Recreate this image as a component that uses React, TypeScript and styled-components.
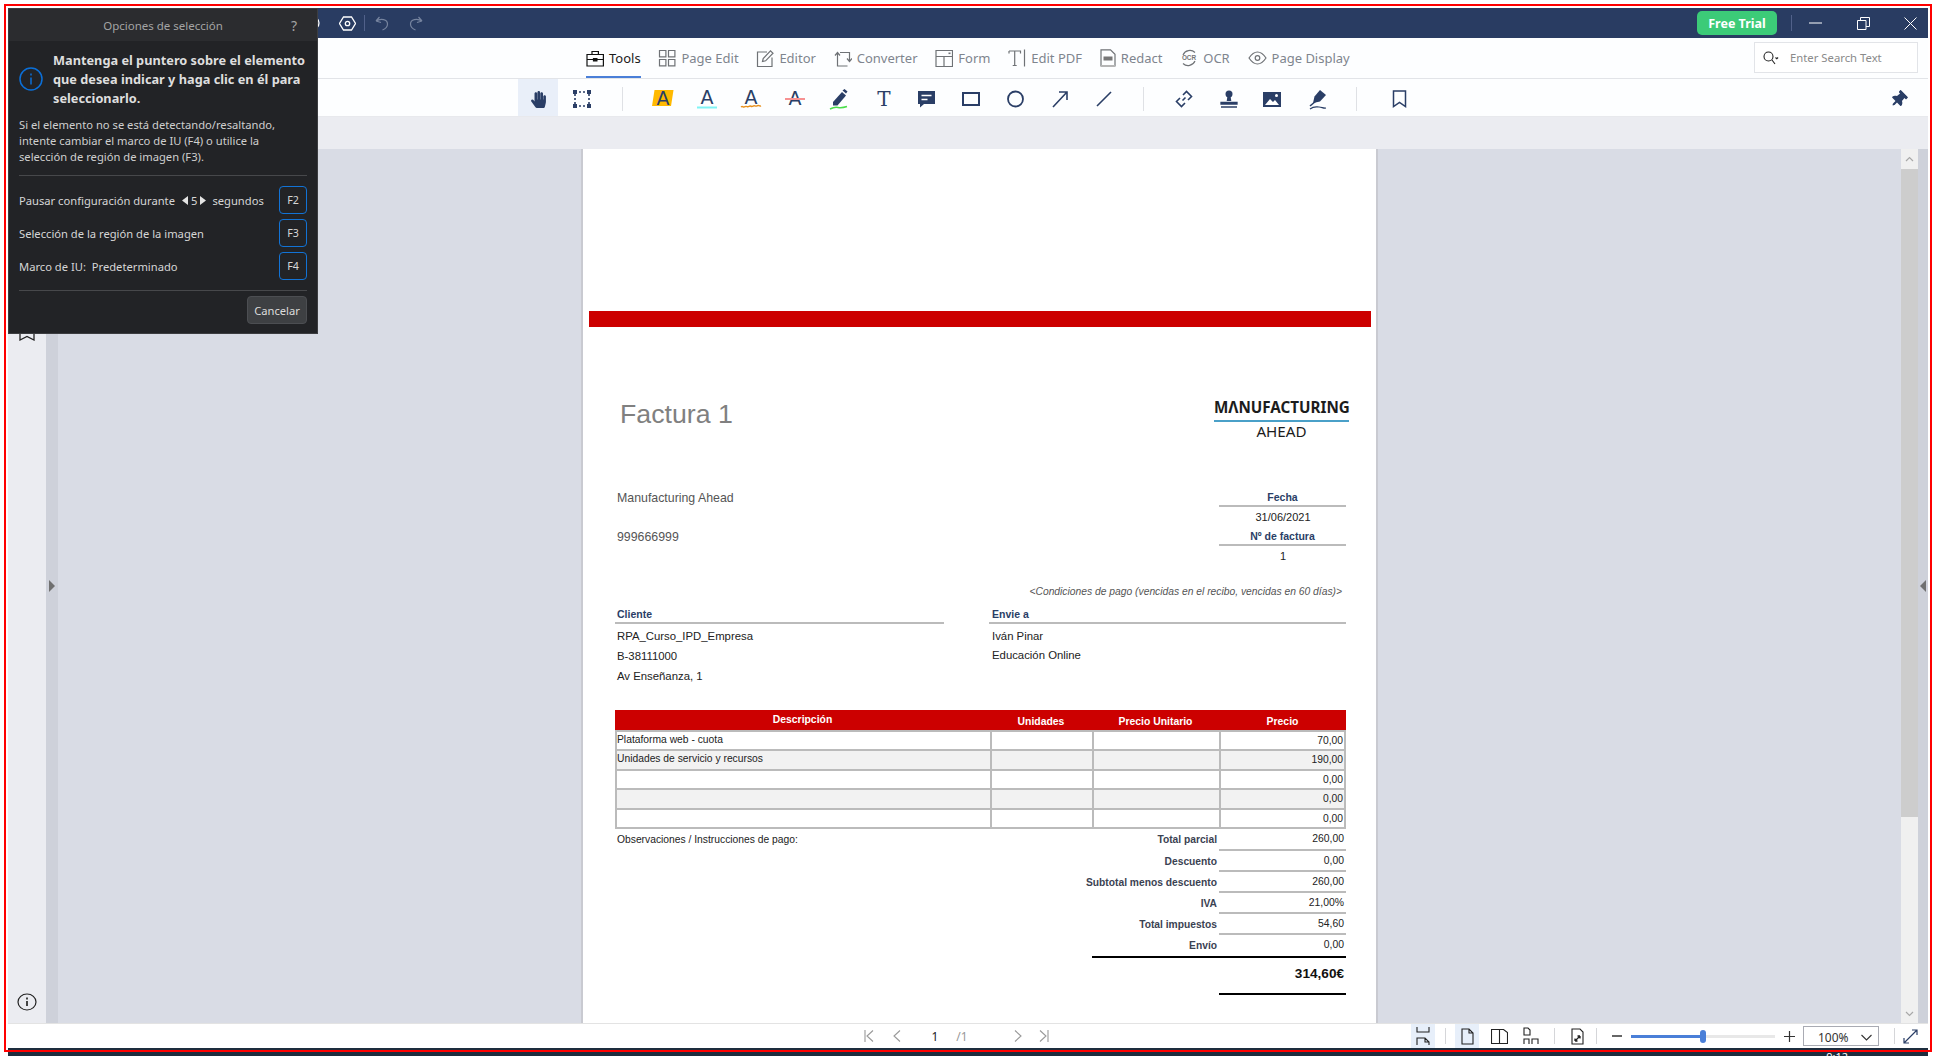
import React from "react";
import styled, { createGlobalStyle } from "styled-components";
import { FaHandPaper, FaThumbtack } from "react-icons/fa";

const Global = createGlobalStyle`
  html, body { margin: 0; padding: 0; background: #fff; overflow: hidden; }
  * { box-sizing: border-box; }
`;

const UI = `"Noto Sans", "Open Sans", sans-serif`;
const DOC = `"Liberation Sans", Arial, sans-serif`;
const NAVY = "#2a3e66";

const Screen = styled.div`
  position: relative; width: 1936px; height: 1056px; overflow: hidden; background: #fff;
  padding: 8px 8px 0; display: flex; flex-direction: column; font-family: ${UI};
`;
const RedFrame = styled.div`
  position: absolute; left: 4px; top: 4px; width: 1928px; height: 1048px;
  border: 2px solid #f00; pointer-events: none; z-index: 5;
`;
const Win = styled.div`width: 1920px; height: 1040px; flex: none; display: flex; flex-direction: column; background: #fff;`;
const Strip = styled.div`
  flex: none; height: 8px; width: 1920px; background: #1d2d3e; color: #fff; font-size: 11px; line-height: 12px;
  padding: 3px 80px 0 0; text-align: right; overflow: hidden;
`;

/* title bar */
const TitleBar = styled.div`flex: none; height: 30px; background: #293c62; display: flex; align-items: center; padding: 0 9px 0 288px;`;
const TitleSlot = styled.div`width: 34px; height: 30px; display: flex; align-items: center; justify-content: center;`;
const TitleDivider = styled.div<{ $ml?: number }>`width: 1px; height: 16px; background: #51618a; margin-left: ${p => p.$ml ?? 0}px;`;
const FreeTrial = styled.button`
  margin-left: auto; width: 80px; height: 24px; border: 0; border-radius: 5px; background: #3ccb78; color: #fff;
  font: 700 12.5px ${UI}; padding: 0;
`;
const WinBtn = styled.div<{ $ml: number }>`
  width: 18px; height: 18px; margin-left: ${p => p.$ml}px; display: flex; align-items: center; justify-content: center;
`;

/* tabs */
const TabBar = styled.div`
  flex: none; height: 41px; background: #fdfeff; border-bottom: 1px solid #e2e4e8; display: flex; padding: 0 10px 0 578px; gap: 17.8px;
`;
const Tab = styled.div<{ $active?: boolean }>`
  height: 40px; display: flex; align-items: center; gap: 5px; font-size: 13px; white-space: nowrap; padding-top: 1px;
  color: ${p => (p.$active ? "#1b1b1b" : "#7f858e")};
  border-bottom: 2px solid ${p => (p.$active ? "#4a7fd8" : "transparent")};
`;
const SearchBox = styled.div`
  margin: 4px 0 0 auto; width: 164px; height: 31px; border: 1px solid #e2e4e8; background: #fff;
  display: flex; align-items: center; padding-left: 8px; gap: 11px; font-size: 11.3px; color: #8a8a8a;
`;

/* toolbar */
const ToolBar = styled.div`
  flex: none; height: 38px; background: #fdfeff; border-bottom: 1px solid #e8e9ed; display: flex; align-items: center; padding: 0 8px 0 508px;
`;
const Tool = styled.div<{ $active?: boolean }>`
  width: 40px; height: 37px; margin: 0 2px; padding-top: 3px; flex: none; display: flex; align-items: center; justify-content: center;
  background: ${p => (p.$active ? "#e9eff9" : "transparent")}; color: ${NAVY};
`;
const ToolDivider = styled.div<{ $mx: number; $mr: number }>`
  width: 1px; height: 24px; flex: none; background: #dfe1e5; margin: 3px ${p => p.$mr}px 0 ${p => p.$mx}px;
`;
const PinTool = styled(Tool)`margin-left: auto;`;
const Pin = styled(FaThumbtack)`transform: rotate(45deg); display: block;`;
const Band = styled.div`flex: none; height: 32px; background: #ebecf1;`;

/* main */
const Main = styled.div`flex: none; height: 874px; display: flex; overflow: hidden;`;
const Sidebar = styled.div`
  width: 38px; flex: none; background: #ebecf1; display: flex; flex-direction: column; align-items: center; padding: 174px 0 10px;
`;
const SideInfo = styled.div`margin-top: auto; height: 20px;`;
const Splitter = styled.div<{ $w: number }>`
  width: ${p => p.$w}px; flex: none; background: #ced1da; display: flex; align-items: center; justify-content: center;
`;
const Arrow = styled.div<{ $dir: "l" | "r" }>`
  width: 0; height: 0;
  border-top: 6px solid transparent; border-bottom: 6px solid transparent;
  ${p => (p.$dir === "r" ? "border-left: 6px solid #707070;" : "border-right: 6px solid #707070;")}
`;
const Canvas = styled.div`flex: 1; background: #d9dce5; display: flex; justify-content: center; overflow: hidden;`;
const Scrollbar = styled.div`width: 17px; flex: none; background: #f0f0f0; display: flex; flex-direction: column; align-items: center;`;
const ScrollBtn = styled.div<{ $h: number }>`height: ${p => p.$h}px; flex: none; display: flex; align-items: center; justify-content: center;`;
const Thumb = styled.div`width: 17px; height: 648px; flex: none; background: #cdcdcd;`;
const ScrollRest = styled.div`flex: 1;`;

/* invoice */
const Sheet = styled.div`
  width: 793px; height: 874px; flex: none; background: #fff; box-shadow: 0 0 0 2px #c9cad1; font-family: ${DOC};
  display: flex; flex-direction: column;
`;
const RedBand = styled.div`height: 16px; margin: 162px 5px 0 6px; background: #cc0000; flex: none;`;
const SheetBody = styled.div`padding: 0 30px 0 32px; display: flex; flex-direction: column;`;
const TitleRow = styled.div`height: 161px; padding-top: 69px; display: flex; justify-content: space-between; align-items: flex-start;`;
const InvoiceTitle = styled.div`font-size: 26.7px; line-height: 36px; color: #808080; padding-left: 5px;`;
const Logo = styled.div`width: 135px; margin: 1px -3px 0 0; font-family: ${UI}; color: #1c1c1c; text-align: center;`;
const LogoTop = styled.div`font-size: 15.2px; font-weight: 700; line-height: 20px; white-space: nowrap; border-bottom: 2px solid #4aa0c8; padding-bottom: 3px; height: 25px;`;
const LogoBottom = styled.div`font-size: 15.2px; line-height: 18px;`;
const InfoRow = styled.div`display: flex; justify-content: space-between; height: 78px;`;
const Company = styled.div<{ $mt?: number }>`font-size: 12.35px; line-height: 20px; color: #555; padding-left: 2px; margin-top: ${p => p.$mt ?? 0}px;`;
const Meta = styled.div`width: 127px; text-align: center; padding-left: 1px;`;
const MetaLabel = styled.div`height: 19px; line-height: 18px; font-size: 10.5px; font-weight: 700; color: ${NAVY}; border-bottom: 2px solid #bbb; margin-left: -1px;`;
const MetaValue = styled.div`height: 20px; line-height: 20px; font-size: 11px; color: #222;`;
const Terms = styled.div`margin-top: 19px; height: 14px; line-height: 14px; font-size: 10.3px; font-style: italic; color: #555; text-align: right; padding-right: 4px;`;
const AddressRow = styled.div`margin-top: 7px; height: 81px; display: grid; grid-template-columns: 329px 357px; column-gap: 45px;`;
const AddressHead = styled.div<{ $pl?: number }>`height: 18px; line-height: 16px; font-size: 10.5px; font-weight: 700; color: ${NAVY}; border-bottom: 2px solid #bbb; padding-left: ${p => p.$pl ?? 2}px; margin-bottom: 3px;`;
const AddressLine = styled.div<{ $h?: number; $pl?: number }>`height: ${p => p.$h ?? 20}px; line-height: 19px; font-size: 11.35px; color: #222; padding-left: ${p => p.$pl ?? 2}px;`;
const TableHead = styled.div`
  margin-top: 23px; height: 19.5px; background: #cc0000; display: grid; grid-template-columns: 375px 102px 127px 127px;
  color: #fff; font-size: 10.4px; font-weight: 700; text-align: center;
`;
const HeadCell = styled.div<{ $up?: boolean }>`line-height: ${p => (p.$up ? 20 : 24)}px;`;
const Grid = styled.div`
  background: #bbb; display: grid; grid-template-columns: 373px 100px 125px 1fr; grid-auto-rows: 17.6px; gap: 2px; padding: 2px;
`;
const Cell = styled.div<{ $alt: boolean; $right?: boolean }>`
  background: ${p => (p.$alt ? "#f2f2f2" : "#fff")}; font-size: 10.3px; color: #222; padding: 0 1px 0 0;
  line-height: ${p => (p.$right ? 18 : 16)}px;
  text-align: ${p => (p.$right ? "right" : "left")};
`;
const Totals = styled.div`display: flex; justify-content: space-between;`;
const Notes = styled.div`font-size: 10.3px; line-height: 22px; color: #222; padding-left: 2px;`;
const TotalCol = styled.div`width: 400px; display: flex; flex-direction: column;`;
const TotalRow = styled.div`height: 21.1px; display: flex; justify-content: flex-end;`;
const TotalLabel = styled.div`font-size: 10.25px; line-height: 22px; font-weight: 700; color: #3b4252; margin-right: 2px; white-space: nowrap;`;
const TotalValue = styled.div<{ $plain?: boolean }>`
  width: 127px; font-size: 10.4px; line-height: 20px; color: #222; text-align: right; padding-right: 2px;
  border-bottom: ${p => (p.$plain ? "0" : "2px solid #bbb")};
`;
const BlackRule = styled.div`height: 2px; width: 254px; background: #000; align-self: flex-end;`;
const GrandTotal = styled.div`
  width: 127px; height: 37px; align-self: flex-end; text-align: right; padding-right: 2px; font-size: 13.6px; font-weight: 700; line-height: 32px; color: #111;
  border-bottom: 2px solid #000;
`;

/* status bar */
const StatusBar = styled.div`flex: none; height: 25px; border-top: 1px solid #e3e3e3; background: #fff; display: flex; align-items: center; padding: 0 8px 0 848px;`;
const PagerBtn = styled.div<{ $ml?: number }>`width: 26px; height: 24px; margin-left: ${p => p.$ml ?? 0}px; display: flex; align-items: center; justify-content: center;`;
const PageNum = styled.div<{ $ml: number; $dim?: boolean }>`
  width: 20px; margin-left: ${p => p.$ml}px; text-align: center; font-size: 12px; color: ${p => (p.$dim ? "#999" : "#222")};
`;
const StatusRight = styled.div`margin-left: auto; display: flex; align-items: center;`;
const StatusBtn = styled.div<{ $ml?: number; $active?: boolean; $w?: number }>`
  width: ${p => p.$w ?? 24}px; height: 24px; margin-left: ${p => p.$ml ?? 0}px; flex: none; display: flex; align-items: center; justify-content: center;
  background: ${p => (p.$active ? "#e7effa" : "transparent")};
`;
const StatusDivider = styled.div<{ $ml: number }>`width: 1px; height: 16px; background: #d5d6d9; margin-left: ${p => p.$ml}px; flex: none;`;
const Slider = styled.div`position: relative; width: 144px; height: 3px; margin-left: 6px; background: #e8e8e8;`;
const SliderFill = styled.div`width: 72px; height: 3px; background: #4a7fd8;`;
const SliderThumb = styled.div`position: absolute; left: 69px; top: -5px; width: 6px; height: 13px; border-radius: 3px; background: #4a7fd8;`;
const ZoomBox = styled.div`
  width: 76px; height: 20px; margin-left: 6px; border: 1px solid #a9abb3; display: flex; align-items: center; padding: 2px 6px 0 14px;
  justify-content: space-between; font-size: 12px; color: #333;
`;

/* modal */
const Modal = styled.div`
  position: absolute; left: 8px; top: 8px; width: 310px; height: 326px; background: #222326; border: 1px solid #3c3d40; z-index: 3;
  color: #d6d6d6; display: flex; flex-direction: column; font-family: ${UI};
`;
const ModalHead = styled.div`
  position: relative; flex: none; height: 32px; background: #2b2c2f; text-align: center; font-size: 11.5px; line-height: 34px; color: #a4a4a4;
`;
const Help = styled.span`position: absolute; right: 20px; top: 0; font-size: 14px; color: #a4a4a4;`;
const ModalBody = styled.div`padding: 10px 10px 0; display: flex; flex-direction: column; flex: 1;`;
const Lead = styled.div`display: flex; align-items: center; gap: 10px; height: 56px;`;
const LeadIcon = styled.svg`flex: none; display: block;`;
const LeadText = styled.div`font-size: 12.75px; font-weight: 700; line-height: 19px; color: #dedede; white-space: pre-line;`;
const Hint = styled.div`margin-top: 10px; font-size: 11.2px; line-height: 16px; color: #cfcfcf; white-space: pre-line;`;
const ModalRule = styled.div<{ $mt: number }>`height: 1px; background: #47484b; margin-top: ${p => p.$mt}px; flex: none;`;
const OptionRows = styled.div`margin-top: 10px; display: flex; flex-direction: column; gap: 5px;`;
const OptionRow = styled.div`height: 28px; display: flex; align-items: center; justify-content: space-between; font-size: 11.2px;`;
const OptionText = styled.span`display: flex; align-items: center; gap: 6px; white-space: pre;`;
const Stepper = styled.span`display: inline-flex; align-items: center; gap: 3px; margin-left: 1px;`;
const KeyBox = styled.div`
  width: 28px; height: 28px; border: 1px solid #1273d6; border-radius: 4px; display: flex; align-items: center; justify-content: center; font-size: 10.7px; color: #d6d6d6;
`;
const ModalFoot = styled.div`display: flex; justify-content: flex-end; margin-top: 5px;`;
const Cancel = styled.button`
  width: 60px; height: 28px; background: #3e4043; color: #dcdcdc; border: 1px solid #4c4e52; border-radius: 4px; font: 11.2px ${UI}; padding: 0;
`;

/* icons */
const S = { fill: "none", stroke: "currentColor", strokeWidth: 1.2 } as const;
const Grey = styled.svg<{ $c?: string }>`color: ${p => p.$c ?? "#6f7276"}; flex: none; display: block;`;

const Ic = ({ w = 18, h = 18, c, children }: { w?: number; h?: number; c?: string; children: React.ReactNode }) => (
  <Grey $c={c} width={w} height={h} viewBox={`0 0 ${w} ${h}`} {...S}>{children}</Grey>
);

const TabIcons: Record<string, React.ReactNode> = {
  Tools: <Ic c="#111"><path d="M1 5.500h16.400v11.500H1zM1 10.500h16.400M6 5.500V2.500h6.400v3" /><path d="M7.500 9.500h3.400v2.400H7.500z" fill="#111" /></Ic>,
  "Page Edit": <Ic><path d="M1.500 1.500h6.400v6.400H1.500zM10.500 1.500h6.400v6.400h-6.400zM1.500 10.500h6.400v6.400H1.500zM10.500 10.500h6.400v6.400h-6.400z" /></Ic>,
  Editor: <Ic><path d="M11 3H1.500v14.500h14.500V8.500" /><path d="M6.500 12.500l.7-3L14.500 1.800l2.500 2.400-7.400 7.600z" /></Ic>,
  Converter: <Ic><path d="M1 6.500l2.500-3 2.500 3M3.500 3.500V17h10" /><path d="M6 3.500h9.500V12M13 9.500l2.500 3 2.500-3" /></Ic>,
  Form: <Ic><path d="M1 1.500h16.500v16H1zM1 7.500h16.500M9 7.500v10" /><path d="M13.500 3.500h2v1.600h-2z" fill="currentColor" stroke="none" /></Ic>,
  "Edit PDF": <Ic><path d="M1 2v2.500M1 2h11.500v2.500M6.700 2v14.500M4.700 16.500h4" /><path d="M16.500 .5v17" /></Ic>,
  Redact: <Ic w={16}><path d="M1 .8h9.500l4.500 4.500V17H1z" /><path d="M1 17h14" strokeWidth={2} stroke="#b5b5b5" /><path d="M3.500 7.500h9v4h-9z" fill="#777" stroke="none" /></Ic>,
  OCR: <Ic><path d="M3 6a7.500 7.500 0 0 1 12-2.500M15 12a7.500 7.500 0 0 1-12 2.500" /><text x="9" y="11.300" fontSize="6.400" fontFamily='"Liberation Sans", sans-serif' stroke="none" fill="#777" textAnchor="middle" fontWeight="700">OCR</text></Ic>,
  "Page Display": <Ic w={19}><path d="M1 9c3-4.500 5.500-6 8.500-6s5.500 1.500 8.500 6c-3 4.500-5.500 6-8.500 6S4 13.500 1 9z" /><circle cx="9.500" cy="9" r="2.300" /></Ic>,
};

const tabs = ["Tools", "Page Edit", "Editor", "Converter", "Form", "Edit PDF", "Redact", "OCR", "Page Display"];

const TB = ({ w = 24, h = 24, children }: { w?: number; h?: number; children: React.ReactNode }) => (
  <Grey $c={NAVY} width={w} height={h} viewBox={`0 0 ${w} ${h}`} fill="none" stroke={NAVY} strokeWidth={1.6}>{children}</Grey>
);
const GlyphA = ({ y = 17 }: { y?: number }) => (
  <text x="12" y={y} fontSize="19" fontFamily='"DejaVu Sans", sans-serif' textAnchor="middle" fill={NAVY} stroke="none">A</text>
);

const toolsA = [
  <TB><path d="M3.500 3h19l-2.500 16H1z" fill="#ffb900" stroke="none" /><GlyphA y={18} /></TB>,
  <TB><GlyphA /><path d="M2 20.500h20" stroke="#7ff4f4" strokeWidth={2} /></TB>,
  <TB><GlyphA /><path d="M2 20c2-1.500 2 1 4-.3s2 1 4-.3 2 1 4-.3 2 1 4-.3 2 1 4 0" stroke="#e8901c" strokeWidth={1.4} /></TB>,
  <TB><GlyphA y={18} /><path d="M2 12h20" stroke="#f79292" strokeWidth={2} /></TB>,
];

export default function App() {
  const rows = [
    ["Plataforma web - cuota", "70,00"],
    ["Unidades de servicio y recursos", "190,00"],
    ["", "0,00"],
    ["", "0,00"],
    ["", "0,00"],
  ];
  const totals = [
    ["Total parcial", "260,00"],
    ["Descuento", "0,00"],
    ["Subtotal menos descuento", "260,00"],
    ["IVA", "21,00%"],
    ["Total impuestos", "54,60"],
    ["Envío", "0,00"],
  ];
  return (
    <Screen>
      <Global />
      <Win>
        <TitleBar>
          <TitleSlot>
            <svg width="16" height="16" viewBox="0 0 16 16" fill="none" stroke="#fff" strokeWidth="1.300"><circle cx="8" cy="8" r="6" /></svg>
          </TitleSlot>
          <TitleSlot>
            <svg width="17" height="15" viewBox="0 0 17 15" fill="none" stroke="#fff" strokeWidth="1.300"><path d="M4.500 1h8l4 6.500-4 6.500h-8l-4-6.500z" /><circle cx="8.500" cy="7.500" r="2.200" /></svg>
          </TitleSlot>
          <TitleDivider />
          <TitleSlot>
            <svg width="14" height="16" viewBox="0 0 14 16" fill="none" stroke="#76849f" strokeWidth="1.200"><path d="M1 6l3.500-4M1 6l5 1.500M1.200 6C6 3 12.500 4.500 12.500 9c0 3-2.500 5-5 6" /></svg>
          </TitleSlot>
          <TitleSlot>
            <svg width="14" height="16" viewBox="0 0 14 16" fill="none" stroke="#76849f" strokeWidth="1.200"><path d="M13 6L9.500 2M13 6L8 7.500M12.800 6C8 3 1.500 4.500 1.500 9c0 3 2.500 5 5 6" /></svg>
          </TitleSlot>
          <FreeTrial>Free Trial</FreeTrial>
          <TitleDivider $ml={14} />
          <WinBtn $ml={14}><svg width="13" height="2"><path d="M0 1h13" stroke="#fff" /></svg></WinBtn>
          <WinBtn $ml={30}><svg width="13" height="13" viewBox="0 0 13 13" fill="none" stroke="#fff"><path d="M.5 3.500h8.500V12.500H.5zM3.500 3.500V.5h9v9H9" /></svg></WinBtn>
          <WinBtn $ml={29}><svg width="13" height="13" viewBox="0 0 13 13" stroke="#fff"><path d="M.5.500l12 12M12.500.500l-12 12" /></svg></WinBtn>
        </TitleBar>

        <TabBar>
          {tabs.map(t => (
            <Tab key={t} $active={t === "Tools"}>{TabIcons[t]}{t}</Tab>
          ))}
          <SearchBox>
            <svg width="16" height="14" viewBox="0 0 16 14" fill="none" stroke="#222" strokeWidth="1.100"><circle cx="5.500" cy="5.500" r="4.500" /><path d="M9 9l3 4" /><path d="M12.500 6.500l1.300 1.200 1.300-1.200" /></svg>
            Enter Search Text
          </SearchBox>
        </TabBar>

        <ToolBar>
          <Tool $active><FaHandPaper size={17} /></Tool>
          <Tool>
            <TB><path d="M5 5h14v14H5z" strokeDasharray="2 2" /><path d="M3 3h4v4H3zM17 3h4v4h-4zM3 17h4v4H3zM17 17h4v4h-4z" fill={NAVY} stroke="none" /></TB>
          </Tool>
          <ToolDivider $mx={18} $mr={18} />
          {toolsA.map((t, i) => <Tool key={i}>{t}</Tool>)}
          <Tool><TB><path d="M6 15L15 5l4 3.500-8.500 10H6z" fill={NAVY} stroke="none" /><path d="M15.500 3.500l2-1.500 3 2.500-1.500 2" fill={NAVY} stroke="none" /><path d="M3 22c4-2 5-2 8-1.500s5 .3 9-1" stroke="#4ade4a" strokeWidth={1.500} /></TB></Tool>
          <Tool><svg width="24" height="24" viewBox="0 0 24 24"><text x="13" y="19" fontSize="20" fontFamily='"DejaVu Serif", serif' textAnchor="middle" fill={NAVY}>T</text></svg></Tool>
          <Tool><TB><path d="M3 4h17v13H9l-4 3.500V17H3z" fill={NAVY} stroke="none" /><path d="M6.500 8.500h10M6.500 12.500h6" stroke="#fff" strokeWidth={1.500} /></TB></Tool>
          <Tool><TB><path d="M4 6h16v12H4z" strokeWidth={2} /></TB></Tool>
          <Tool><TB><circle cx="12.500" cy="12" r="7.500" strokeWidth={1.800} /></TB></Tool>
          <Tool><TB><path d="M6 20L20 5M12 5h8v8" /></TB></Tool>
          <Tool><TB><path d="M6 19L20 5" /></TB></Tool>
          <ToolDivider $mx={18} $mr={18} />
          <Tool><TB><path d="M11 8l3.500-3.500 5 5L16 13M13 16l-3.500 3.500-5-5L8 11M10.500 13.500l3-3" /></TB></Tool>
          <Tool><TB><circle cx="13" cy="7" r="3.500" fill={NAVY} stroke="none" /><path d="M11.500 9h3l.8 5h-4.600z" fill={NAVY} stroke="none" /><path d="M5 15.500h16v1.500H5zM5 20h16" fill={NAVY} strokeWidth={1.300} /></TB></Tool>
          <Tool><TB><path d="M3 5h18v15H3z" fill={NAVY} stroke="none" /><path d="M5 18l5-6 3 3 2-2 4 5z" fill="#fff" stroke="none" /><circle cx="16.500" cy="8.500" r="1.500" fill="#fff" stroke="none" /></TB></Tool>
          <Tool><TB><path d="M9 16l1.500-6.500L16 3l6 5-6 6.500z" fill={NAVY} stroke="none" /><path d="M6 19l6-5" /><path d="M6 22c4-3 6-2 9-2s4 1.500 7 1" strokeWidth={1.200} /></TB></Tool>
          <ToolDivider $mx={18} $mr={20} />
          <Tool><svg width="15" height="18" viewBox="0 0 15 18" fill="none" stroke="#2a3e66" strokeWidth="1.500"><path d="M1.500 1h12v15.500l-6-4-6 4z" /></svg></Tool>
          <PinTool><Pin size={17} /></PinTool>
        </ToolBar>
        <Band />

        <Main>
          <Sidebar>
            <svg width="16" height="18" viewBox="0 0 16 18" fill="none" stroke="#222" strokeWidth="1.300"><path d="M1 1h14v16l-7-3.500L1 17z" /></svg>
            <SideInfo>
              <svg width="20" height="18" viewBox="0 0 20 18" fill="none" stroke="#222" strokeWidth="1.200"><ellipse cx="10" cy="9" rx="9" ry="8" /><path d="M10 8v5" strokeWidth="2" stroke="#444" /><path d="M10 4.500v2" strokeWidth="2" stroke="#444" /></svg>
            </SideInfo>
          </Sidebar>
          <Splitter $w={12}><Arrow $dir="r" /></Splitter>
          <Canvas>
            <Sheet>
              <RedBand />
              <SheetBody>
                <TitleRow>
                  <InvoiceTitle>Factura 1</InvoiceTitle>
                  <Logo>
                    <LogoTop>MΛNUFACTURING</LogoTop>
                    <LogoBottom>AHEAD</LogoBottom>
                  </Logo>
                </TitleRow>
                <InfoRow>
                  <div>
                    <Company>Manufacturing Ahead</Company>
                    <Company $mt={19}>999666999</Company>
                  </div>
                  <Meta>
                    <MetaLabel>Fecha</MetaLabel>
                    <MetaValue>31/06/2021</MetaValue>
                    <MetaLabel>Nº de factura</MetaLabel>
                    <MetaValue>1</MetaValue>
                  </Meta>
                </InfoRow>
                <Terms>&lt;Condiciones de pago (vencidas en el recibo, vencidas en 60 días)&gt;</Terms>
                <AddressRow>
                  <div>
                    <AddressHead>Cliente</AddressHead>
                    <AddressLine>RPA_Curso_IPD_Empresa</AddressLine>
                    <AddressLine>B-38111000</AddressLine>
                    <AddressLine>Av Enseñanza, 1</AddressLine>
                  </div>
                  <div>
                    <AddressHead $pl={3}>Envie a</AddressHead>
                    <AddressLine $h={19} $pl={3}>Iván Pinar</AddressLine>
                    <AddressLine $pl={3}>Educación Online</AddressLine>
                  </div>
                </AddressRow>
                <TableHead>
                  <HeadCell $up>Descripción</HeadCell>
                  <HeadCell>Unidades</HeadCell>
                  <HeadCell>Precio Unitario</HeadCell>
                  <HeadCell>Precio</HeadCell>
                </TableHead>
                <Grid>
                  {rows.map(([d, v], i) => (
                    <React.Fragment key={i}>
                      <Cell $alt={i % 2 === 1}>{d}</Cell>
                      <Cell $alt={i % 2 === 1} />
                      <Cell $alt={i % 2 === 1} />
                      <Cell $alt={i % 2 === 1} $right>{v}</Cell>
                    </React.Fragment>
                  ))}
                </Grid>
                <Totals>
                  <Notes>Observaciones / Instrucciones de pago:</Notes>
                  <TotalCol>
                    {totals.map(([l, v]) => (
                      <TotalRow key={l}>
                        <TotalLabel>{l}</TotalLabel>
                        <TotalValue $plain={l === "Envío"}>{v}</TotalValue>
                      </TotalRow>
                    ))}
                    <BlackRule />
                    <GrandTotal>314,60€</GrandTotal>
                  </TotalCol>
                </Totals>
              </SheetBody>
            </Sheet>
          </Canvas>
          <Scrollbar>
            <ScrollBtn $h={20}><svg width="9" height="6" viewBox="0 0 9 6" fill="none" stroke="#a8a8a8" strokeWidth="1.200"><path d="M1 5l3.500-3.500L8 5" /></svg></ScrollBtn>
            <Thumb />
            <ScrollRest />
            <ScrollBtn $h={18}><svg width="9" height="6" viewBox="0 0 9 6" fill="none" stroke="#a8a8a8" strokeWidth="1.200"><path d="M1 1l3.500 3.500L8 1" /></svg></ScrollBtn>
          </Scrollbar>
          <Splitter $w={10}><Arrow $dir="l" /></Splitter>
        </Main>

        <StatusBar>
          <PagerBtn><svg width="10" height="14" viewBox="0 0 10 14" fill="none" stroke="#999" strokeWidth="1.100"><path d="M1 1v12M9 1.500L3 7l6 5.500" /></svg></PagerBtn>
          <PagerBtn $ml={2}><svg width="8" height="14" viewBox="0 0 8 14" fill="none" stroke="#999" strokeWidth="1.100"><path d="M7 1.500L1 7l6 5.500" /></svg></PagerBtn>
          <PageNum $ml={15}>1</PageNum>
          <PageNum $ml={7} $dim>/1</PageNum>
          <PagerBtn $ml={33}><svg width="8" height="14" viewBox="0 0 8 14" fill="none" stroke="#999" strokeWidth="1.100"><path d="M1 1.500L7 7l-6 5.500" /></svg></PagerBtn>
          <PagerBtn><svg width="10" height="14" viewBox="0 0 10 14" fill="none" stroke="#999" strokeWidth="1.100"><path d="M9 1v12M1 1.500L7 7l-6 5.500" /></svg></PagerBtn>
          <StatusRight>
            <StatusBtn $active>
              <svg width="14" height="18" viewBox="0 0 14 18" fill="none" stroke="#222" strokeWidth="1.100"><path d="M1 0v5h12V0M1 18v-7h8l4 4v3M9 11v4h4" /></svg>
            </StatusBtn>
            <StatusDivider $ml={10} />
            <StatusBtn $ml={9} $active>
              <svg width="13" height="17" viewBox="0 0 13 17" fill="none" stroke="#222" strokeWidth="1.100"><path d="M1 1h7l4 4v11H1zM8 1v4h4" /></svg>
            </StatusBtn>
            <StatusBtn $ml={8}>
              <svg width="17" height="15" viewBox="0 0 17 15" fill="none" stroke="#222" strokeWidth="1.100"><path d="M.5.500h12l4 3v11H.500zM8.500.5v14" /></svg>
            </StatusBtn>
            <StatusBtn $ml={8}>
              <svg width="16" height="18" viewBox="0 0 16 18" fill="none" stroke="#222" strokeWidth="1.100"><path d="M1 1h4l2 2v5H1zM1 17v-5h5v5M9 17v-5h6v5" /></svg>
            </StatusBtn>
            <StatusDivider $ml={11} />
            <StatusBtn $ml={10}>
              <svg width="13" height="17" viewBox="0 0 13 17" fill="none" stroke="#222" strokeWidth="1.100"><path d="M1 1h8l3 3v12H1z" /><path d="M4 13l5-5M9 8H6.500M9 8v2.500M4 13h2.500M4 13v-2.500" strokeWidth="1.300" /></svg>
            </StatusBtn>
            <StatusDivider $ml={7} />
            <StatusBtn $ml={12} $w={16}><svg width="10" height="2"><path d="M0 1h10" stroke="#666" strokeWidth="2" /></svg></StatusBtn>
            <Slider><SliderFill /><SliderThumb /></Slider>
            <StatusBtn $ml={6} $w={16}><svg width="11" height="11" viewBox="0 0 11 11" stroke="#333" strokeWidth="1.200"><path d="M0 5.500h11M5.500 0v11" /></svg></StatusBtn>
            <ZoomBox>
              100%
              <svg width="11" height="7" viewBox="0 0 11 7" fill="none" stroke="#333" strokeWidth="1.100"><path d="M.5 1l5 5 5-5" /></svg>
            </ZoomBox>
            <StatusDivider $ml={15} />
            <StatusBtn $ml={5} $w={20}>
              <svg width="15" height="15" viewBox="0 0 15 15" fill="none" stroke="#2a3e66" strokeWidth="1.200"><path d="M1 14L14 1M9 1h5v5M1 9v5h5" /></svg>
            </StatusBtn>
          </StatusRight>
        </StatusBar>
      </Win>
      <Strip>9:12</Strip>

      <Modal>
        <ModalHead>
          Opciones de selección
          <Help>?</Help>
        </ModalHead>
        <ModalBody>
          <Lead>
            <LeadIcon width="24" height="24" viewBox="0 0 24 24" fill="none" stroke="#0b6fd8" strokeWidth="1.500"><circle cx="12" cy="12" r="11" /><path d="M12 10.500v7M12 6.500v2" /></LeadIcon>
            <LeadText>{"Mantenga el puntero sobre el elemento\nque desea indicar y haga clic en él para\nseleccionarlo."}</LeadText>
          </Lead>
          <Hint>{"Si el elemento no se está detectando/resaltando,\nintente cambiar el marco de IU (F4) o utilice la\nselección de región de imagen (F3)."}</Hint>
          <ModalRule $mt={10} />
          <OptionRows>
            <OptionRow>
              <OptionText>
                Pausar configuración durante
                <Stepper>
                  <svg width="6" height="9"><path d="M6 0v9L0 4.500z" fill="#e4e4e4" /></svg>
                  5
                  <svg width="6" height="9"><path d="M0 0v9l6-4.500z" fill="#e4e4e4" /></svg>
                </Stepper>
                segundos
              </OptionText>
              <KeyBox>F2</KeyBox>
            </OptionRow>
            <OptionRow><OptionText>Selección de la región de la imagen</OptionText><KeyBox>F3</KeyBox></OptionRow>
            <OptionRow><OptionText>Marco de IU:  Predeterminado</OptionText><KeyBox>F4</KeyBox></OptionRow>
          </OptionRows>
          <ModalRule $mt={10} />
          <ModalFoot><Cancel>Cancelar</Cancel></ModalFoot>
        </ModalBody>
      </Modal>
      <RedFrame />
    </Screen>
  );
}
